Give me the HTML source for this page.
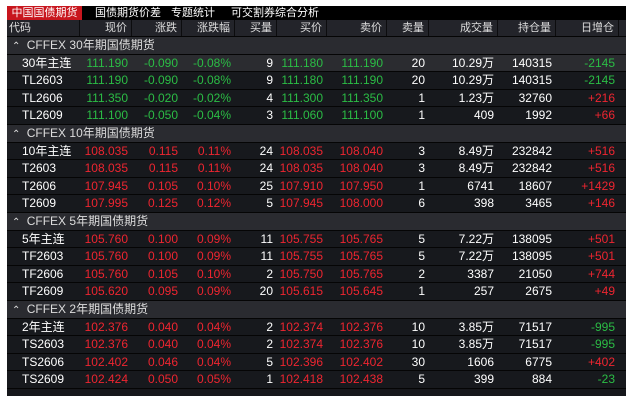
<!DOCTYPE html>
<html><head><meta charset="utf-8"><style>
*{margin:0;padding:0;box-sizing:border-box}
body{width:630px;height:403px;background:#fff;font-family:"Liberation Sans","Noto Sans CJK SC",sans-serif;overflow:hidden;position:relative}
#w{position:absolute;left:7px;top:6px;width:619px;height:390px;background:#16171b}
#tabs{height:14px;background:#000;position:relative;font-size:11px;color:#fff;line-height:14px}
#tabs span{position:absolute;top:0}
.act{background:#c8161e;left:0;width:75px;text-align:center}
.r{display:flex;height:17.6px;line-height:17px;font-size:12px;border-bottom:1px solid #050505;background:#17191d;color:#fff}
.r div{text-align:right;padding-right:4px;white-space:nowrap}
.r div:first-child{text-align:left;padding-left:15px}
.h{background:#23242a;height:17px;font-size:11px;color:#ddd}
.h div{border-right:1px solid #0c0c0e}
.h div:first-child{padding-left:2px}
.s{background:#2a2b30;color:#ddd;font-size:12px;height:17.6px;line-height:17px;padding-left:5px;border-bottom:1px solid #050505}
.s b{font-weight:normal;font-size:10px;margin-right:3px}
.hl{background:#2b2c30}
.c1{width:73px}.c2{width:52px}.c3{width:50px}.c4{width:53px}.c5{width:42px}.c6{width:50px}.c7{width:60px}.c8{width:42px}.c9{width:69px}.c10{width:58px}.c11{width:63px}
.g{color:#2bbd45}.d{color:#ee2530}
</style></head><body><div id="w">
<div id="tabs"><span class="act">中国国债期货</span><span style="left:88px">国债期货价差</span><span style="left:164px">专题统计</span><span style="left:224px">可交割券综合分析</span></div>
<div class="r h"><div class="c1">代码</div><div class="c2">现价</div><div class="c3">涨跌</div><div class="c4">涨跌幅</div><div class="c5">买量</div><div class="c6">买价</div><div class="c7">卖价</div><div class="c8">卖量</div><div class="c9">成交量</div><div class="c10">持仓量</div><div class="c11">日增仓</div></div>
<div class="s"><b>⌃</b> CFFEX 30年期国债期货</div>
<div class="r hl"><div class="c1">30年主连</div><div class="c2 g">111.190</div><div class="c3 g">-0.090</div><div class="c4 g">-0.08%</div><div class="c5">9</div><div class="c6 g">111.180</div><div class="c7 g">111.190</div><div class="c8">20</div><div class="c9">10.29万</div><div class="c10">140315</div><div class="c11 g">-2145</div></div>
<div class="r"><div class="c1">TL2603</div><div class="c2 g">111.190</div><div class="c3 g">-0.090</div><div class="c4 g">-0.08%</div><div class="c5">9</div><div class="c6 g">111.180</div><div class="c7 g">111.190</div><div class="c8">20</div><div class="c9">10.29万</div><div class="c10">140315</div><div class="c11 g">-2145</div></div>
<div class="r"><div class="c1">TL2606</div><div class="c2 g">111.350</div><div class="c3 g">-0.020</div><div class="c4 g">-0.02%</div><div class="c5">4</div><div class="c6 g">111.300</div><div class="c7 g">111.350</div><div class="c8">1</div><div class="c9">1.23万</div><div class="c10">32760</div><div class="c11 d">+216</div></div>
<div class="r"><div class="c1">TL2609</div><div class="c2 g">111.100</div><div class="c3 g">-0.050</div><div class="c4 g">-0.04%</div><div class="c5">3</div><div class="c6 g">111.060</div><div class="c7 g">111.100</div><div class="c8">1</div><div class="c9">409</div><div class="c10">1992</div><div class="c11 d">+66</div></div>
<div class="s"><b>⌃</b> CFFEX 10年期国债期货</div>
<div class="r"><div class="c1">10年主连</div><div class="c2 d">108.035</div><div class="c3 d">0.115</div><div class="c4 d">0.11%</div><div class="c5">24</div><div class="c6 d">108.035</div><div class="c7 d">108.040</div><div class="c8">3</div><div class="c9">8.49万</div><div class="c10">232842</div><div class="c11 d">+516</div></div>
<div class="r"><div class="c1">T2603</div><div class="c2 d">108.035</div><div class="c3 d">0.115</div><div class="c4 d">0.11%</div><div class="c5">24</div><div class="c6 d">108.035</div><div class="c7 d">108.040</div><div class="c8">3</div><div class="c9">8.49万</div><div class="c10">232842</div><div class="c11 d">+516</div></div>
<div class="r"><div class="c1">T2606</div><div class="c2 d">107.945</div><div class="c3 d">0.105</div><div class="c4 d">0.10%</div><div class="c5">25</div><div class="c6 d">107.910</div><div class="c7 d">107.950</div><div class="c8">1</div><div class="c9">6741</div><div class="c10">18607</div><div class="c11 d">+1429</div></div>
<div class="r"><div class="c1">T2609</div><div class="c2 d">107.995</div><div class="c3 d">0.125</div><div class="c4 d">0.12%</div><div class="c5">5</div><div class="c6 d">107.945</div><div class="c7 d">108.000</div><div class="c8">6</div><div class="c9">398</div><div class="c10">3465</div><div class="c11 d">+146</div></div>
<div class="s"><b>⌃</b> CFFEX 5年期国债期货</div>
<div class="r"><div class="c1">5年主连</div><div class="c2 d">105.760</div><div class="c3 d">0.100</div><div class="c4 d">0.09%</div><div class="c5">11</div><div class="c6 d">105.755</div><div class="c7 d">105.765</div><div class="c8">5</div><div class="c9">7.22万</div><div class="c10">138095</div><div class="c11 d">+501</div></div>
<div class="r"><div class="c1">TF2603</div><div class="c2 d">105.760</div><div class="c3 d">0.100</div><div class="c4 d">0.09%</div><div class="c5">11</div><div class="c6 d">105.755</div><div class="c7 d">105.765</div><div class="c8">5</div><div class="c9">7.22万</div><div class="c10">138095</div><div class="c11 d">+501</div></div>
<div class="r"><div class="c1">TF2606</div><div class="c2 d">105.760</div><div class="c3 d">0.105</div><div class="c4 d">0.10%</div><div class="c5">2</div><div class="c6 d">105.750</div><div class="c7 d">105.765</div><div class="c8">2</div><div class="c9">3387</div><div class="c10">21050</div><div class="c11 d">+744</div></div>
<div class="r"><div class="c1">TF2609</div><div class="c2 d">105.620</div><div class="c3 d">0.095</div><div class="c4 d">0.09%</div><div class="c5">20</div><div class="c6 d">105.615</div><div class="c7 d">105.645</div><div class="c8">1</div><div class="c9">257</div><div class="c10">2675</div><div class="c11 d">+49</div></div>
<div class="s"><b>⌃</b> CFFEX 2年期国债期货</div>
<div class="r"><div class="c1">2年主连</div><div class="c2 d">102.376</div><div class="c3 d">0.040</div><div class="c4 d">0.04%</div><div class="c5">2</div><div class="c6 d">102.374</div><div class="c7 d">102.376</div><div class="c8">10</div><div class="c9">3.85万</div><div class="c10">71517</div><div class="c11 g">-995</div></div>
<div class="r"><div class="c1">TS2603</div><div class="c2 d">102.376</div><div class="c3 d">0.040</div><div class="c4 d">0.04%</div><div class="c5">2</div><div class="c6 d">102.374</div><div class="c7 d">102.376</div><div class="c8">10</div><div class="c9">3.85万</div><div class="c10">71517</div><div class="c11 g">-995</div></div>
<div class="r"><div class="c1">TS2606</div><div class="c2 d">102.402</div><div class="c3 d">0.046</div><div class="c4 d">0.04%</div><div class="c5">5</div><div class="c6 d">102.396</div><div class="c7 d">102.402</div><div class="c8">30</div><div class="c9">1606</div><div class="c10">6775</div><div class="c11 d">+402</div></div>
<div class="r"><div class="c1">TS2609</div><div class="c2 d">102.424</div><div class="c3 d">0.050</div><div class="c4 d">0.05%</div><div class="c5">1</div><div class="c6 d">102.418</div><div class="c7 d">102.438</div><div class="c8">5</div><div class="c9">399</div><div class="c10">884</div><div class="c11 g">-23</div></div>
</div></body></html>
